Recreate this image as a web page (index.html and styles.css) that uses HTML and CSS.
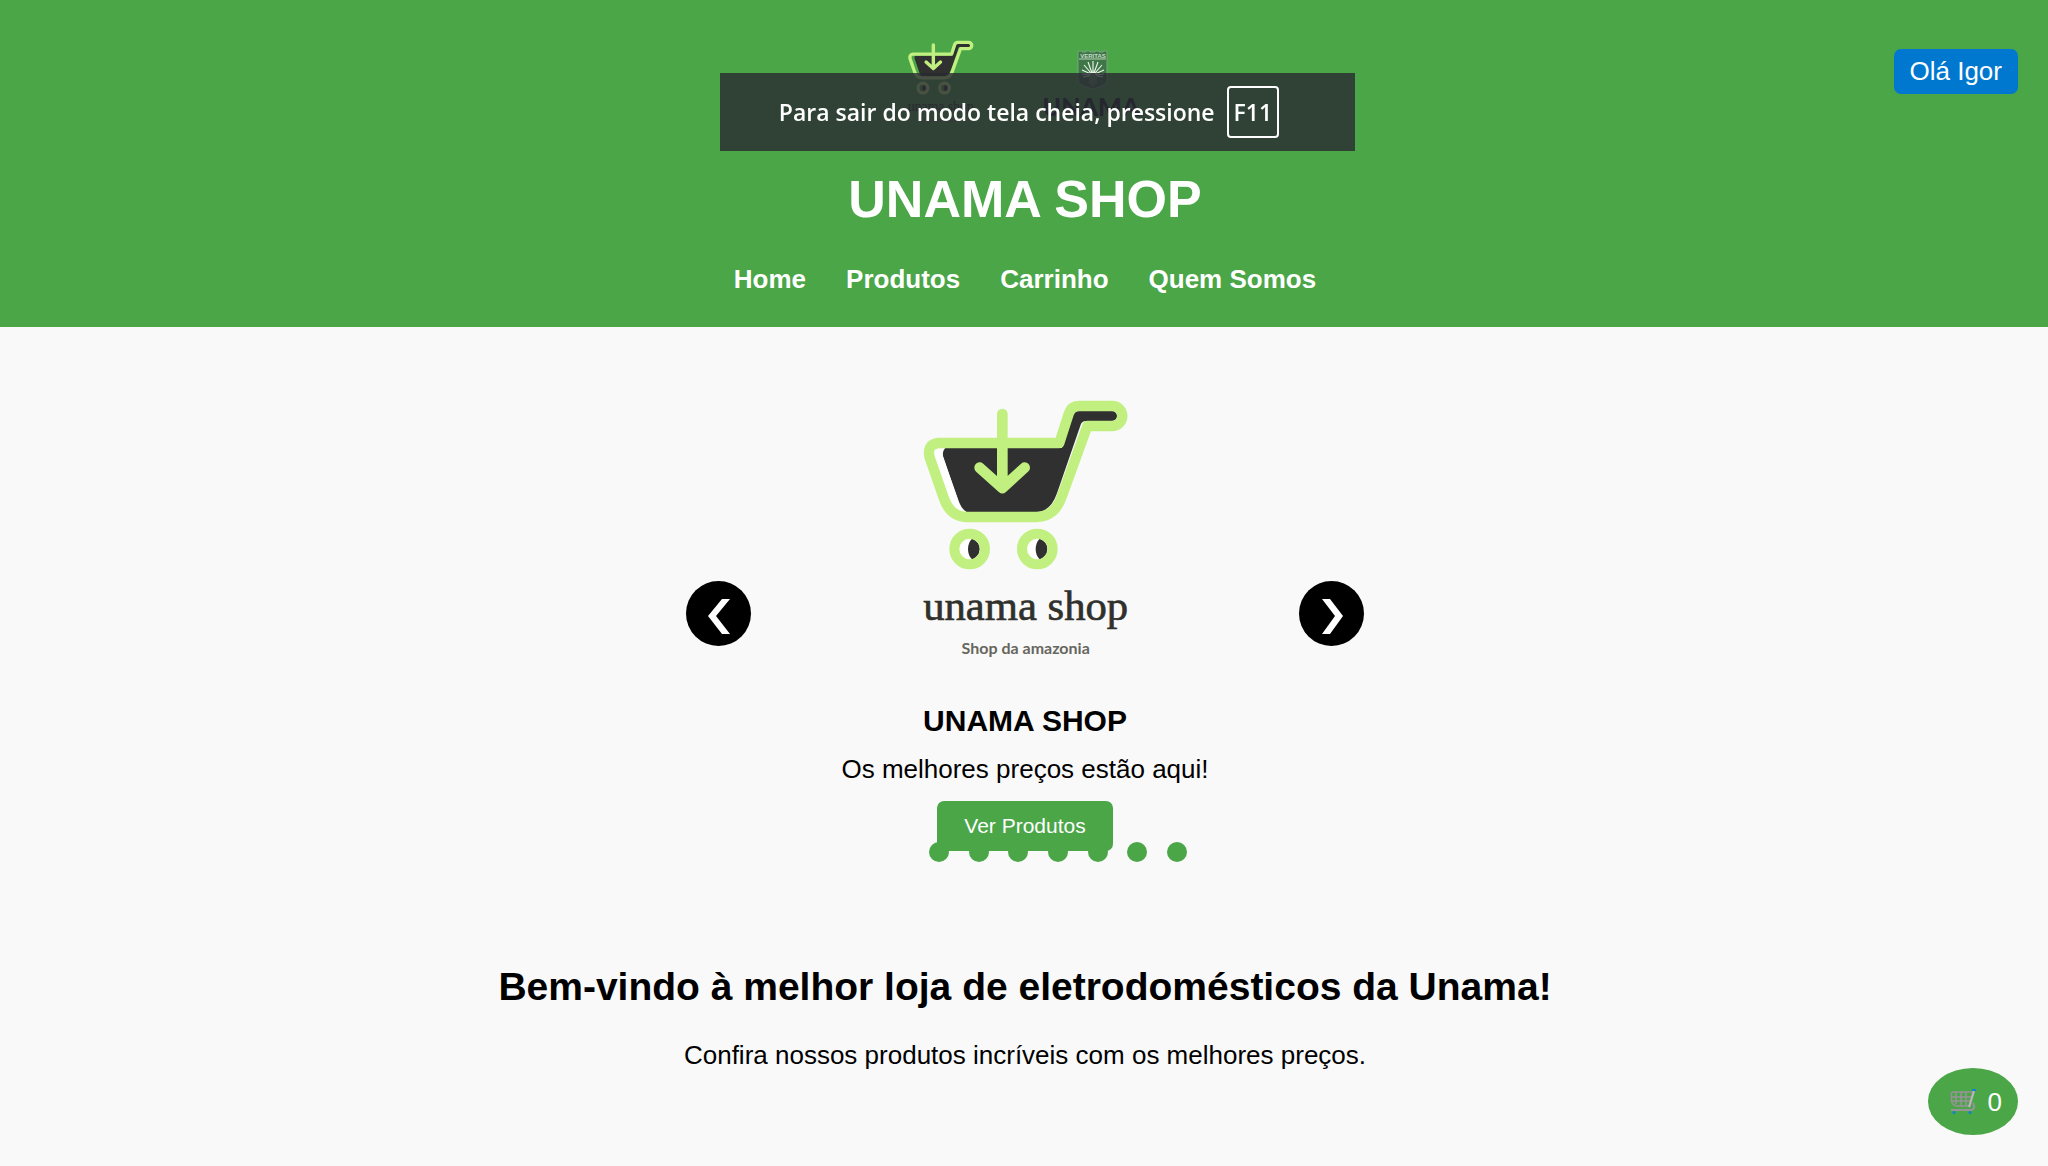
FILE: index.html
```html
<!DOCTYPE html>
<html lang="pt-BR">
<head>
  <meta charset="UTF-8">
  <meta name="viewport" content="width=device-width, initial-scale=1">
  <title>UNAMA SHOP</title>
  <link rel="stylesheet" href="styles.css">
</head>
<body>
  <svg class="sprite" aria-hidden="true">
    <symbol id="shop-logo" viewBox="0 0 840 900">
      <path d="M196 204 H545 L578 108 Q583 93 598 93 H696 A15 15 0 0 1 696 123 H617 Q606 123 602 134 L531 340 Q512 395 470 396 H260 Q246 388 238 368 L188 228 Q188 212 196 204Z" fill="#303030"/>
      <path class="logo-inner" d="M165 206 H190 Q186 215 189 228 L237 370 Q243 386 256 396 Q222 394 207 352 L163 222 Q161 212 165 206Z" fill="#fff"/>
      <path d="M175 189 H538 L566 102 Q574 78 596 78 H697 A30 30 0 0 1 697 138 H622 L546 348 Q526 409 470 411 H258 Q211 409 192 356 L149 233 Q139 193 175 189Z" fill="none" stroke="#c1f080" stroke-width="31" stroke-linejoin="round"/>
      <path d="M367 102 V322 M299 263 L367 324 L434 263" fill="none" stroke="#c1f080" stroke-width="32" stroke-linecap="round" stroke-linejoin="round"/>
      <g id="wheel">
        <circle class="logo-inner" cx="269" cy="507" r="34" fill="#fff"/>
        <path d="M276 476 Q298 484 299 507 Q298 530 276 538 Q264 526 264 507 Q264 488 276 476Z" fill="#303030"/>
        <circle cx="269" cy="507" r="46" fill="none" stroke="#c1f080" stroke-width="30"/>
      </g>
      <use href="#wheel" x="203"/>
      <text class="logo-name" x="437" y="721" text-anchor="middle">unama shop</text>
      <text class="logo-tagline" x="437" y="822" text-anchor="middle">Shop da amazonia</text>
    </symbol>
  </svg>

  <header class="site-header">
    <div class="logos">
      <svg class="logo-shop" role="img" aria-label="unama shop"><use href="#shop-logo"/></svg>
      <svg class="logo-unama" viewBox="0 0 128 96" role="img" aria-label="UNAMA">
        <path d="M50 17h4v1h4v-1h4v1h5v-1h4v1h4v-1h4v29q0 4-5 6l-9 3-10-3q-5-2-5-6z" fill="#3f7648" stroke="#75a77b" stroke-width="1"/>
        <path d="M51 25h27" stroke="#b9d2b8"/>
        <text class="shield-text" x="65" y="24" text-anchor="middle">VERITAS</text>
        <path d="M64 52V36M66 52V36M62 50V38M68 50V38" stroke="#8fae92" stroke-width=".8"/>
        <path d="M65 39V27M64 39l-4-11M66 39l4-11M63 39l-7-8M67 39l7-8M63 40l-9-4M67 40l9-4M62 41l-8-1M68 41l8-1M61 42l-6 1M69 42l6 1" stroke="#eef5ec" stroke-width="1.1"/>
        <text class="unama-name" x="63" y="82" text-anchor="middle">UNAMA</text>
      </svg>
    </div>
    <h1 class="site-title">UNAMA SHOP</h1>
    <nav class="site-nav">
      <a href="#home">Home</a>
      <a href="#produtos">Produtos</a>
      <a href="#carrinho">Carrinho</a>
      <a href="#quem-somos">Quem Somos</a>
    </nav>
    <button class="user-button" type="button">Olá Igor</button>
  </header>

  <main class="content">
    <section class="carousel" aria-label="Destaques">
      <button class="arrow" type="button" aria-label="Anterior">
        <svg viewBox="0 0 65 65"><path d="M36 18h8L30 35l14 18h-8L22 35z" fill="#fff"/></svg>
      </button>
      <div class="slide">
        <svg class="slide-logo" role="img" aria-label="unama shop"><use href="#shop-logo"/></svg>
        <h3 class="slide-title">UNAMA SHOP</h3>
        <p class="slide-text">Os melhores preços estão aqui!</p>
        <a class="slide-button" href="#produtos">Ver Produtos</a>
      </div>
      <button class="arrow" type="button" aria-label="Próximo">
        <svg viewBox="0 0 65 65"><path d="M23 18h8l13 17-13 18h-8l13-18z" fill="#fff"/></svg>
      </button>
      <div class="dots">
        <button class="dot" type="button" aria-label="Slide 1"></button>
        <button class="dot" type="button" aria-label="Slide 2"></button>
        <button class="dot" type="button" aria-label="Slide 3"></button>
        <button class="dot" type="button" aria-label="Slide 4"></button>
        <button class="dot" type="button" aria-label="Slide 5"></button>
        <button class="dot" type="button" aria-label="Slide 6"></button>
        <button class="dot" type="button" aria-label="Slide 7"></button>
      </div>
    </section>

    <section class="welcome">
      <h2 class="welcome-title">Bem-vindo à melhor loja de eletrodomésticos da Unama!</h2>
      <p class="welcome-text">Confira nossos produtos incríveis com os melhores preços.</p>
    </section>
  </main>

  <a class="cart-button" href="#carrinho" aria-label="Carrinho">
    <svg class="cart-icon" viewBox="0 0 26 26" aria-hidden="true">
      <path d="M1.500 4Q1.500 3 3 3H23L20 17H7Q2 16 1.500 12ZM6 3V15M11 3V17M16 3V17M2 8H21M2 12H20" fill="none" stroke="#9a929b" stroke-width="1.500"/>
      <path d="M23 14Q26 20 21 21H1" fill="none" stroke="#9a929b" stroke-width="2"/>
      <path d="M24 2L19 18" stroke="#bdb6be" stroke-width="2"/>
      <path d="M22 1H26" stroke="#0e83d6" stroke-width="2"/>
      <circle cx="4" cy="23.500" r="1.500" fill="#0e83d6"/>
      <circle cx="20" cy="23.500" r="1.500" fill="#0e83d6"/>
    </svg>
    <span>0</span>
  </a>

  <div class="fullscreen-notice" role="status">
    <span>Para sair do modo tela cheia, pressione</span>
    <kbd class="key">F11</kbd>
  </div>
</body>
</html>
```
FILE: styles.css
```css
* {
  box-sizing: border-box;
}

body {
  margin: 0;
  background: #f9f9f9;
  color: #000;
  font-family: "Liberation Sans", Arial, sans-serif;
  font-size: 26px;
  line-height: 30px;
}

h1, h2, h3, p {
  margin: 0;
}

button {
  border: 0;
  padding: 0;
  font: inherit;
  cursor: pointer;
}

a {
  color: inherit;
  text-decoration: none;
}

.sprite {
  position: absolute;
  width: 0;
  height: 0;
}

.logo-name {
  font-family: "Liberation Serif", serif;
  font-size: 128px;
  fill: #30302c;
  stroke: #30302c;
  stroke-width: 2px;
}

.logo-tagline {
  font-family: Lato, sans-serif;
  font-size: 48px;
  font-weight: 700;
  fill: #66665e;
}

/* Header */
.site-header {
  position: relative;
  display: flex;
  flex-direction: column;
  align-items: center;
  padding: 34px 30px 33px 32px;
  background: #4aa647;
  color: #fff;
}

.logos {
  display: flex;
  gap: 44px;
}

.logo-shop {
  --inner: #4aa647;
  width: 90px;
  height: 96px;
}

.logo-inner {
  fill: var(--inner, #fff);
}

.logo-unama {
  width: 128px;
  height: 96px;
}

.shield-text {
  font-size: 6px;
  font-weight: 700;
  fill: #c9dcc8;
}

.unama-name {
  font-family: Lato, sans-serif;
  font-size: 25px;
  font-weight: 900;
  fill: #1c1c2c;
}

.site-title {
  margin-top: 39px;
  font-size: 52px;
  line-height: 60px;
}

.site-nav {
  display: flex;
  gap: 40px;
  margin-top: 35px;
  font-weight: 700;
}

.user-button {
  position: absolute;
  top: 49px;
  right: 30px;
  padding: 7px 16px 8px;
  border-radius: 7px;
  background: #0078d0;
  color: #fff;
}

.content {
  padding-left: 2px;
}

/* Carousel */
.carousel {
  position: relative;
  display: grid;
  grid-template-columns: 65px 1fr 65px;
  align-items: center;
  max-width: 678px;
  margin: 0 auto;
  padding-top: 49px;
}

.arrow {
  width: 65px;
  height: 65px;
  border-radius: 50%;
  background: #000;
}

.arrow svg {
  display: block;
}

.slide {
  display: flex;
  flex-direction: column;
  align-items: center;
  padding-top: 4px;
  text-align: center;
}

.slide-logo {
  width: 280px;
  height: 300px;
  margin-right: 10px;
}

.slide-title {
  margin-top: 24px;
  font-size: 30px;
  line-height: 34px;
}

.slide-text {
  margin-top: 16px;
}

.slide-button {
  margin-top: 17px;
  padding: 10px 27px;
  border-radius: 7px;
  background: #4aa647;
  color: #fff;
  font-size: 21px;
}

.dots {
  position: absolute;
  bottom: -11px;
  left: 243px;
  display: flex;
  justify-content: space-between;
  width: 258px;
}

.dot {
  width: 20px;
  height: 20px;
  border-radius: 50%;
  background: #4aa647;
}

/* Welcome */
.welcome {
  padding: 114px 26px 96px;
  text-align: center;
}

.welcome-title {
  font-size: 39px;
  line-height: 44px;
}

.welcome-text {
  margin-top: 31px;
}

/* Floating elements */
.cart-button {
  position: fixed;
  right: 30px;
  bottom: 31px;
  display: flex;
  align-items: center;
  gap: 12px;
  padding: 19px 16px 18px 22px;
  border-radius: 50%;
  background: #4aa647;
  color: #fff;
}

.cart-icon {
  width: 26px;
  height: 26px;
}

.fullscreen-notice {
  position: fixed;
  top: 73px;
  left: 50%;
  display: flex;
  align-items: center;
  justify-content: center;
  gap: 12px;
  width: 635px;
  height: 78px;
  margin-left: -304px;
  padding-right: 17px;
  background: rgba(41, 41, 50, 0.8);
  color: #fff;
  font-family: "Segoe UI", "Open Sans", sans-serif;
  font-size: 23px;
  font-weight: 600;
}

.key {
  padding: 9px 5px;
  border: 2px solid #fff;
  border-radius: 4px;
  font: inherit;
}
```
